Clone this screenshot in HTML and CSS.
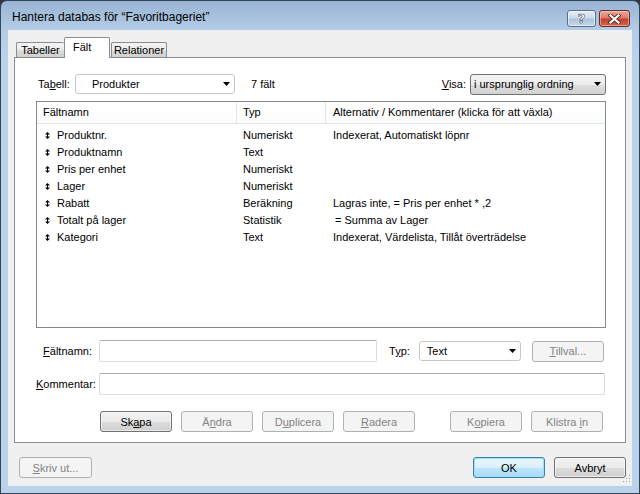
FILE: index.html
```html
<!DOCTYPE html>
<html lang="sv">
<head>
<meta charset="utf-8">
<title>Hantera databas</title>
<link rel="stylesheet" href="styles.css">
</head>
<body>
<div class="window">
  <div class="titlebar">
    <div class="title">Hantera databas för “Favoritbageriet”</div>
    <div class="caption-btns">
      <div class="cap-btn help"><span>?</span></div>
      <div class="cap-btn close">
        <svg width="13" height="10" viewBox="0 0 13 10">
          <path d="M2.5 1.5 L10.5 8.5 M10.5 1.5 L2.5 8.5" stroke="#5a2a22" stroke-width="4" stroke-linecap="square" fill="none"/>
          <path d="M2.5 1.5 L10.5 8.5 M10.5 1.5 L2.5 8.5" stroke="#ffffff" stroke-width="2.2" stroke-linecap="square" fill="none"/>
        </svg>
      </div>
    </div>
  </div>
  <div class="client">
    <div class="tabs">
      <div class="tab tab-tabeller">Tabeller</div>
      <div class="tab tab-active">Fält</div>
      <div class="tab tab-rel">Relationer</div>
    </div>
    <div class="panel">
      <div class="toprow">
        <span class="lbl lbl-tabell">Ta<u>b</u>ell:</span>
        <div class="combo combo-table"><span>Produkter</span>
          <svg class="arrow" width="7" height="4" viewBox="0 0 7 4"><polygon points="0,0 7,0 3.5,4" fill="#000"/></svg>
        </div>
        <span class="count">7 fält</span>
        <span class="spacer"></span>
        <span class="lbl lbl-visa"><u>V</u>isa:</span>
        <div class="combo combo-visa"><span>i ursprunglig ordning</span>
          <svg class="arrow" width="7" height="4" viewBox="0 0 7 4"><polygon points="0,0 7,0 3.5,4" fill="#000"/></svg>
        </div>
      </div>
      <div class="list">
        <div class="list-head">
          <div class="hcell">Fältnamn</div>
          <div class="hcell">Typ</div>
          <div class="hcell hcell-last">Alternativ / Kommentarer (klicka för att växla)</div>
        </div>
        <div class="list-body">
          <div class="row"><div class="cell name"><svg class="sort" width="5" height="7" viewBox="0 0 5 7"><polygon points="2.5,0 5,2.5 0,2.5" fill="#000"/><polygon points="0,4.5 5,4.5 2.5,7" fill="#000"/><rect x="2" y="2" width="1" height="3" fill="#000"/></svg>Produktnr.</div><div class="cell">Numeriskt</div><div class="cell alt">Indexerat, Automatiskt löpnr</div></div>
          <div class="row"><div class="cell name"><svg class="sort" width="5" height="7" viewBox="0 0 5 7"><polygon points="2.5,0 5,2.5 0,2.5" fill="#000"/><polygon points="0,4.5 5,4.5 2.5,7" fill="#000"/><rect x="2" y="2" width="1" height="3" fill="#000"/></svg>Produktnamn</div><div class="cell">Text</div><div class="cell alt"></div></div>
          <div class="row"><div class="cell name"><svg class="sort" width="5" height="7" viewBox="0 0 5 7"><polygon points="2.5,0 5,2.5 0,2.5" fill="#000"/><polygon points="0,4.5 5,4.5 2.5,7" fill="#000"/><rect x="2" y="2" width="1" height="3" fill="#000"/></svg>Pris per enhet</div><div class="cell">Numeriskt</div><div class="cell alt"></div></div>
          <div class="row"><div class="cell name"><svg class="sort" width="5" height="7" viewBox="0 0 5 7"><polygon points="2.5,0 5,2.5 0,2.5" fill="#000"/><polygon points="0,4.5 5,4.5 2.5,7" fill="#000"/><rect x="2" y="2" width="1" height="3" fill="#000"/></svg>Lager</div><div class="cell">Numeriskt</div><div class="cell alt"></div></div>
          <div class="row"><div class="cell name"><svg class="sort" width="5" height="7" viewBox="0 0 5 7"><polygon points="2.5,0 5,2.5 0,2.5" fill="#000"/><polygon points="0,4.5 5,4.5 2.5,7" fill="#000"/><rect x="2" y="2" width="1" height="3" fill="#000"/></svg>Rabatt</div><div class="cell">Beräkning</div><div class="cell alt">Lagras inte, = Pris per enhet * ,2</div></div>
          <div class="row"><div class="cell name"><svg class="sort" width="5" height="7" viewBox="0 0 5 7"><polygon points="2.5,0 5,2.5 0,2.5" fill="#000"/><polygon points="0,4.5 5,4.5 2.5,7" fill="#000"/><rect x="2" y="2" width="1" height="3" fill="#000"/></svg>Totalt på lager</div><div class="cell">Statistik</div><div class="cell alt alt-indent">= Summa av Lager</div></div>
          <div class="row"><div class="cell name"><svg class="sort" width="5" height="7" viewBox="0 0 5 7"><polygon points="2.5,0 5,2.5 0,2.5" fill="#000"/><polygon points="0,4.5 5,4.5 2.5,7" fill="#000"/><rect x="2" y="2" width="1" height="3" fill="#000"/></svg>Kategori</div><div class="cell">Text</div><div class="cell alt">Indexerat, Värdelista, Tillåt överträdelse</div></div>
        </div>
      </div>
      <div class="form-row row-one">
        <span class="flabel"><u>F</u>ältnamn:</span>
        <div class="input input-name"></div>
        <span class="lbl lbl-typ">T<u>y</u>p:</span>
        <div class="combo combo-typ"><span>Text</span>
          <svg class="arrow" width="7" height="4" viewBox="0 0 7 4"><polygon points="0,0 7,0 3.5,4" fill="#000"/></svg>
        </div>
        <div class="btn btn-disabled btn-tillval"><span><u>T</u>illval...</span></div>
      </div>
      <div class="form-row row-two">
        <span class="flabel"><u>K</u>ommentar:</span>
        <div class="input input-comment"></div>
      </div>
      <div class="btn-row">
        <div class="btn"><span>Sk<u>a</u>pa</span></div>
        <div class="btn btn-disabled"><span>Ä<u>n</u>dra</span></div>
        <div class="btn btn-disabled"><span>D<u>u</u>plicera</span></div>
        <div class="btn btn-disabled"><span><u>R</u>adera</span></div>
        <div class="btn btn-disabled btn-kopiera"><span>K<u>o</u>piera</span></div>
        <div class="btn btn-disabled"><span>Klistra <u>i</u>n</span></div>
      </div>
    </div>
    <div class="bottom">
      <div class="btn btn-disabled btn-print"><span><u>S</u>kriv ut...</span></div>
      <span class="spacer"></span>
      <div class="btn btn-default"><span>OK</span></div>
      <div class="btn"><span>Avbryt</span></div>
    </div>
    <svg class="grip" width="10" height="10" viewBox="0 0 10 10">
      <rect x="8" y="0" width="1" height="1" fill="#9ba6b3"/>
      <rect x="5" y="3" width="1" height="1" fill="#9ba6b3"/>
      <rect x="8" y="3" width="1" height="1" fill="#9ba6b3"/>
      <rect x="2" y="6" width="1" height="1" fill="#9ba6b3"/>
      <rect x="5" y="6" width="1" height="1" fill="#9ba6b3"/>
      <rect x="8" y="6" width="1" height="1" fill="#9ba6b3"/>
    </svg>
  </div>
</div>
</body>
</html>
```

FILE: styles.css
```css
html, body {
  margin: 0;
  padding: 0;
  background: #2f3640;
}
body {
  font-family: "Liberation Sans", Arial, sans-serif;
  font-size: 11px;
  color: #000;
}
u { text-decoration: underline; text-underline-offset: 1px; }

.window {
  width: 640px;
  height: 494px;
  box-sizing: border-box;
  border: 1px solid #34465a;
  border-radius: 7px 7px 0 0;
  background: linear-gradient(#98b4d3 0px, #b4cde7 29px, #bad2ea 60px, #bad2ea 100%);
  display: flex;
  flex-direction: column;
  overflow: hidden;
}

.titlebar {
  height: 29px;
  display: flex;
  align-items: flex-start;
  padding: 0 9px 0 11px;
}
.title {
  font-size: 12px;
  margin-top: 9px;
  flex: 1;
  white-space: nowrap;
}
.caption-btns {
  display: flex;
  gap: 3px;
  margin-top: 9px;
}
.cap-btn {
  height: 17px;
  box-sizing: border-box;
  border-radius: 3px;
  display: flex;
  align-items: center;
  justify-content: center;
}
.help {
  width: 29px;
  border: 1px solid #5a6f8a;
  background: linear-gradient(#e6edf6 0%, #cbd9ea 48%, #aec3dc 52%, #c3d5ea 100%);
  box-shadow: inset 0 0 0 1px rgba(255,255,255,0.55);
}
.help span {
  font-family: "DejaVu Sans", sans-serif;
  font-weight: bold;
  font-size: 13px;
  line-height: 13px;
  color: #fff;
  -webkit-text-stroke: 0.6px #4a5a70;
}
.close {
  width: 31px;
  border: 1px solid #6b2b22;
  background: linear-gradient(#eaa898 0%, #db7a66 48%, #c3412a 52%, #d4614a 100%);
  box-shadow: inset 0 0 0 1px rgba(255,220,210,0.5);
}

.client {
  position: relative;
  flex: 1;
  margin: 0 7px 7px 7px;
  background: #f0f0f0;
  padding: 6px 6px 8px 6px;
  display: flex;
  flex-direction: column;
}

.tabs {
  height: 21px;
  display: flex;
  align-items: flex-end;
  padding-left: 2px;
}
.tab {
  height: 15px;
  box-sizing: border-box;
  border: 1px solid #898c95;
  border-bottom: none;
  border-radius: 2px 2px 0 0;
  background: linear-gradient(#f3f3f3 0%, #ebebeb 50%, #dddddd 51%, #cfcfcf 100%);
  text-align: center;
  line-height: 14px;
}
.tab-tabeller { width: 48px; border-right: none; }
.tab-rel { width: 56px; margin-left: 1px; }
.tab-active {
  position: relative;
  z-index: 1;
  width: 46px;
  height: 21px;
  margin-bottom: -1px;
  background: #fff;
  text-align: left;
  padding-left: 8px;
  padding-top: 2px;
  line-height: 14px;
}

.panel {
  height: 386px;
  box-sizing: border-box;
  border: 1px solid #898c95;
  background: #fff;
  padding: 16px 19px 10px 21px;
  display: flex;
  flex-direction: column;
}

.toprow {
  height: 20px;
  display: flex;
  align-items: center;
  margin-bottom: 7px;
}
.lbl-tabell { width: 37px; margin-left: 2px; }
.spacer { flex: 1; }
.lbl-visa { margin-right: 4px; }
.count { margin-left: 16px; }

.combo {
  height: 20px;
  box-sizing: border-box;
  border-radius: 3px;
  display: flex;
  align-items: center;
  position: relative;
}
.combo span { flex: 1; white-space: nowrap; }
.combo .arrow { margin-right: 4px; }
.combo-table {
  width: 160px;
  border: 1px solid #c5c7cc;
  background: #fff;
  padding-left: 16px;
}
.combo-visa {
  width: 136px;
  height: 21px;
  border: 1px solid #707070;
  background: linear-gradient(#f4f4f4 0%, #ececec 50%, #dedede 51%, #d2d2d2 100%);
  padding-left: 3px;
}
.combo-typ {
  width: 102px;
  border: 1px solid #c5c7cc;
  background: #fff;
  padding-left: 7px;
}

.list {
  height: 227px;
  box-sizing: border-box;
  border: 1px solid #828790;
  background: #fff;
  display: flex;
  flex-direction: column;
}
.list-head {
  height: 22px;
  box-sizing: border-box;
  display: grid;
  grid-template-columns: 200px 89px 1fr;
  border-bottom: 1px solid #e5e5e5;
  background: linear-gradient(#ffffff, #fbfcfc);
}
.hcell {
  border-right: 1px solid #e5e5e5;
  padding: 4px 0 0 6px;
  line-height: 13px;
  white-space: nowrap;
}
.hcell-last { border-right: none; padding-left: 7px; }

.list-body {
  padding-top: 3px;
}
.row {
  height: 17px;
  display: grid;
  grid-template-columns: 200px 89px 1fr;
  align-items: center;
}
.cell {
  padding-left: 6px;
  white-space: nowrap;
  line-height: 13px;
}
.cell.name {
  padding-left: 8px;
  display: flex;
  align-items: center;
}
.sort { margin-right: 7px; }
.cell.alt { padding-left: 7px; }
.cell.alt-indent { padding-left: 9px; }

.form-row {
  height: 22px;
  display: flex;
  align-items: center;
}
.row-one { margin-top: 12px; }
.row-two { margin-top: 11px; margin-right: 1px; }
.flabel {
  width: 56px;
  text-align: right;
  margin-right: 7px;
  white-space: nowrap;
}
.input {
  height: 22px;
  box-sizing: border-box;
  border: 1px solid #dadce2;
  border-top-color: #abadb3;
  border-radius: 2px;
  background: #fff;
}
.input-name { width: 278px; }
.input-comment { flex: 1; }
.lbl-typ { margin-left: 12px; margin-right: 9px; }
.btn-tillval { margin-left: 11px; width: 73px; }

.btn-row {
  margin-top: 16px;
  display: flex;
  gap: 9px;
  padding-left: 64px;
}
.btn-kopiera { margin-left: 26px; }

.btn {
  width: 72px;
  height: 21px;
  box-sizing: border-box;
  border: 1px solid #707070;
  border-radius: 3px;
  background: linear-gradient(#f2f2f2 0%, #ebebeb 50%, #dddddd 51%, #cfcfcf 100%);
  box-shadow: inset 0 0 0 1px rgba(255,255,255,0.6);
  display: flex;
  align-items: center;
  justify-content: center;
  white-space: nowrap;
}
.btn-disabled {
  border-color: #adb2b5;
  background: #f4f4f4;
  box-shadow: none;
  color: #838383;
}
.btn-default {
  border-color: #3c7fb1;
  background: linear-gradient(#eaf6fd 0%, #d9f0fc 50%, #bee6fd 51%, #a7d9f5 100%);
  box-shadow: inset 0 0 0 1px #9ce0fc;
}

.bottom {
  margin-top: 14px;
  height: 21px;
  display: flex;
  gap: 9px;
}
.btn-print { margin-left: 5px; width: 73px; }

.grip {
  position: absolute;
  right: 1px;
  bottom: 1px;
}
```
